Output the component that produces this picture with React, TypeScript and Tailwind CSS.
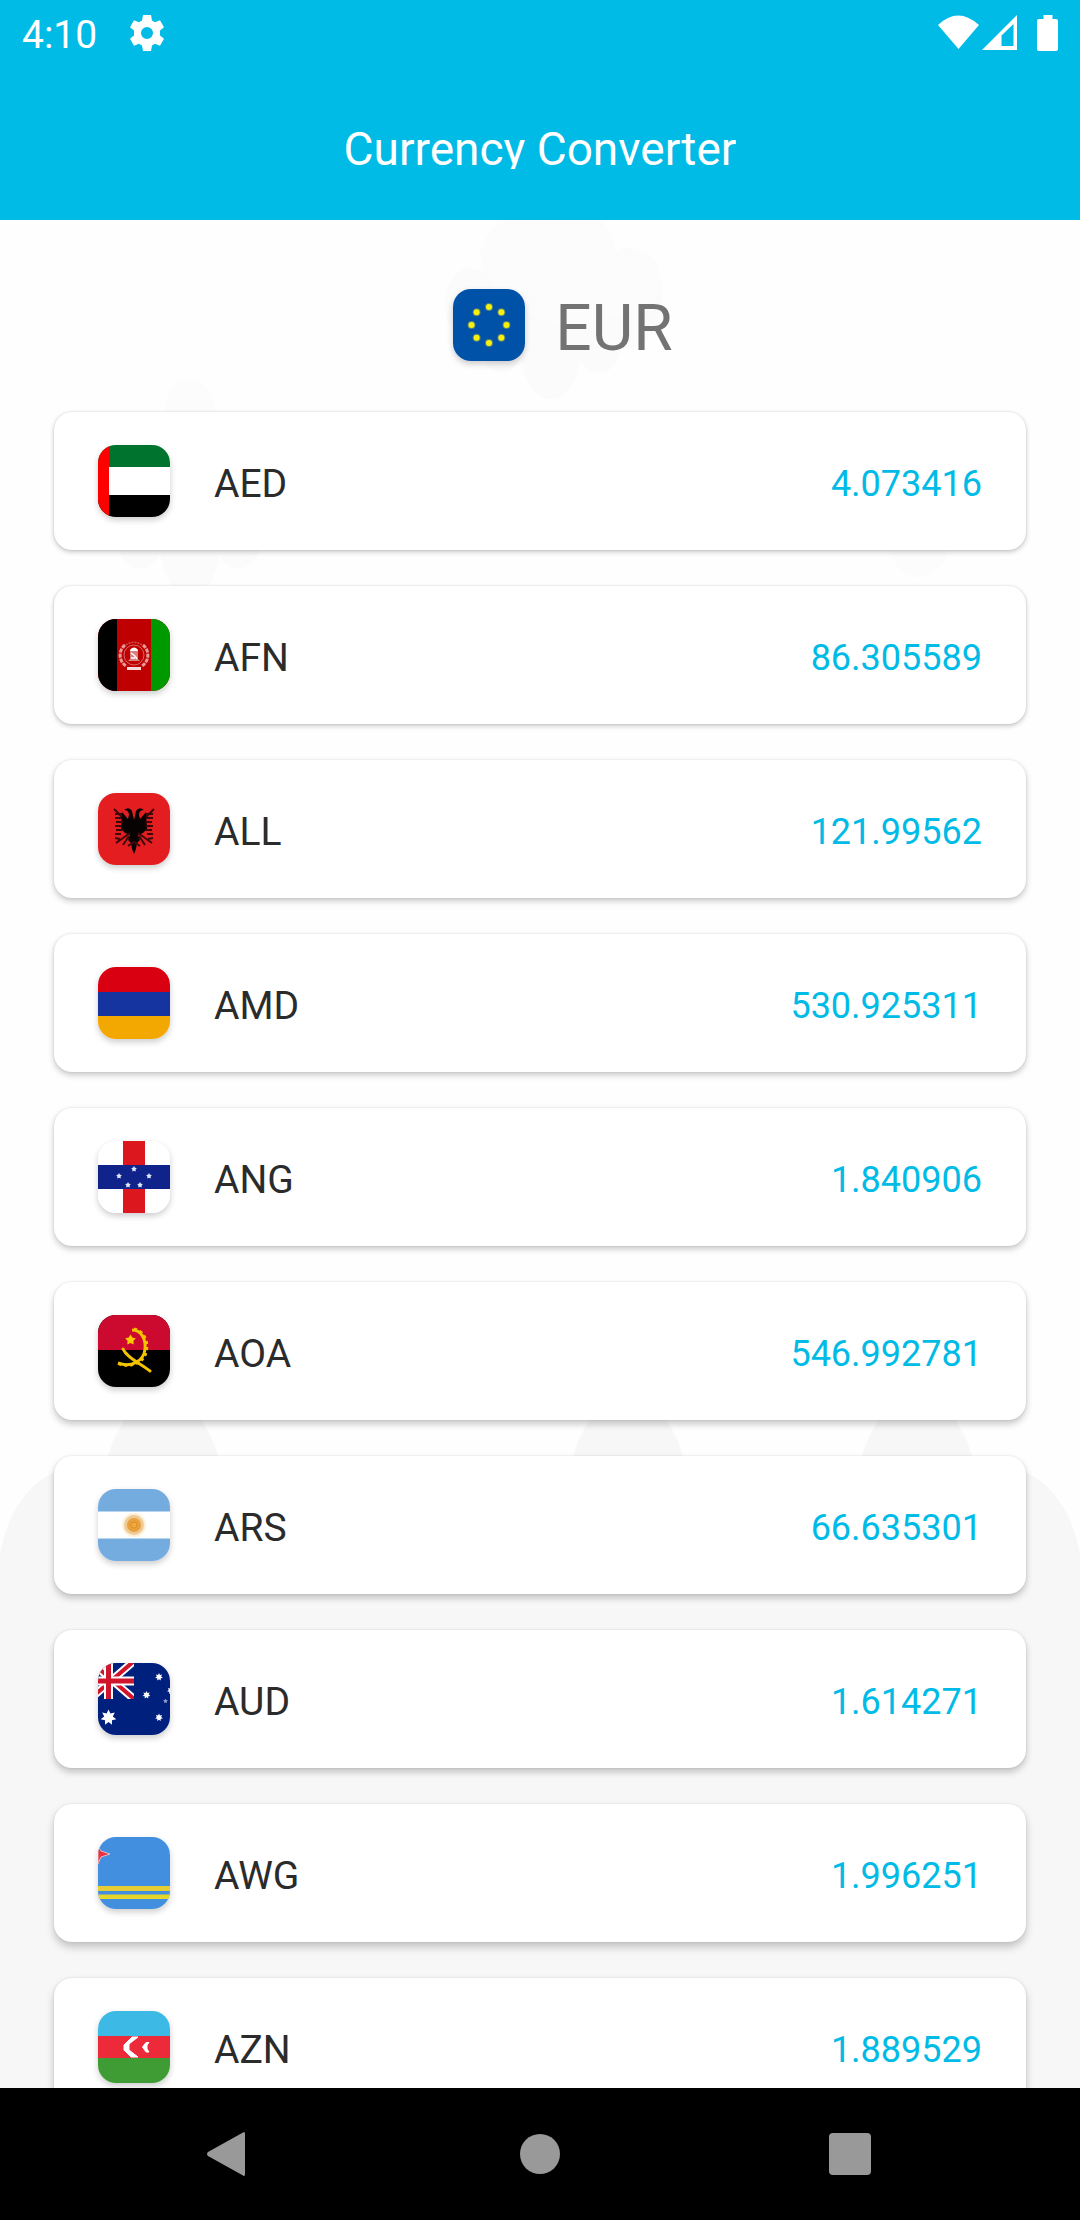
import React from 'react';

type IconProps = { className?: string };

function Star({ x, y, r, fill, points = 5 }: { x: number; y: number; r: number; fill: string; points?: number }) {
  const coords = Array.from({ length: points * 2 }, (_, i) => {
    const a = (Math.PI * i) / points - Math.PI / 2;
    const d = i % 2 === 0 ? r : r * 0.55;
    return `${x + d * Math.cos(a)},${y + d * Math.sin(a)}`;
  }).join(' ');
  return <polygon points={coords} fill={fill} />;
}

const flags: Record<string, React.ReactNode> = {
  EUR: (
    <>
      <rect width="72" height="72" fill="#0052a8" />
      {Array.from({ length: 8 }, (_, i) => {
        const a = (Math.PI * i) / 4;
        const x = 36 + 17.5 * Math.cos(a);
        const y = 36 + 18 * Math.sin(a);
        return (
          <g key={i}>
            <circle cx={x} cy={y} r={4} fill="#8fa55c" opacity={0.6} />
            <circle cx={x} cy={y} r={3} fill="#f6f00c" />
          </g>
        );
      })}
    </>
  ),
  AED: (
    <>
      <rect width="72" height="72" fill="#fff" />
      <rect width="72" height="22" fill="#00732f" />
      <rect y="50" width="72" height="22" fill="#000" />
      <rect width="11" height="72" fill="#f00" />
    </>
  ),
  AFN: (
    <>
      <rect width="72" height="72" fill="#be0000" />
      <rect width="19" height="72" fill="#000" />
      <rect x="53" width="19" height="72" fill="#009900" />
      <path d="M27 26A13 13 0 0 0 28 47M45 26A13 13 0 0 1 44 47" fill="none" stroke="#e59a9a" strokeWidth="3" strokeDasharray="4 1" />
      <path d="M28 26A13 13 0 0 1 44 26" fill="none" stroke="#d05050" strokeWidth="1.500" strokeDasharray="2 1" />
      <circle cx="36" cy="36" r="10" fill="none" stroke="#d76a6a" strokeWidth="1" />
      <path d="M29 49.500h14" stroke="#f6dada" strokeWidth="3" />
      <path d="M32 32q0-3 4-3.500q4 0.500 4 3.500z" fill="#fff" />
      <path d="M32 32h8v8l2 2H30l2-2z" fill="#d98080" />
      <path d="M33 34l4 3 2 3M33 39h4" stroke="#fff" strokeWidth="1.500" fill="none" />
    </>
  ),
  ALL: (
    <>
      <rect width="72" height="72" fill="#e41e20" />
      <path
        d="M36 27L34 18Q31 13 26 17Q31 17 31 22L30 26L24 19L23 36L27 40L32 42L30 47L33 50L34 56L36 61L38 56L39 50L42 47L40 42L45 40L49 36L48 19L42 26L41 22Q41 17 46 17Q41 13 38 18z"
        fill="#080303"
      />
      <path
        d="M16 16L24 24M17 21h7M17 25h7M18 29h7M17 33h7M18 37h7M17 41h6M32 40L18 50M31 43L25 52M22 46l-5-1M56 16L48 24M55 21h-7M55 25h-7M54 29h-7M55 33h-7M54 37h-7M55 41h-6M40 40L54 50M41 43L47 52M50 46l5-1M30 53l6-4l6 4"
        stroke="#3c090a"
        strokeWidth="2"
        fill="none"
      />
    </>
  ),
  AMD: (
    <>
      <rect width="72" height="25" fill="#d90012" />
      <rect y="25" width="72" height="24" fill="#1634a0" />
      <rect y="49" width="72" height="23" fill="#f2a800" />
    </>
  ),
  ANG: (
    <>
      <rect width="72" height="72" fill="#fff" />
      <rect x="25" width="22" height="72" fill="#dc171d" />
      <rect y="24" width="72" height="24" fill="#10238a" />
      <Star x={36} y={28} r={3} fill="#dfe8fa" />
      <Star x={21} y={35} r={3} fill="#dfe8fa" />
      <Star x={51} y={35} r={3} fill="#dfe8fa" />
      <Star x={30} y={44} r={3} fill="#dfe8fa" />
      <Star x={42} y={44} r={3} fill="#dfe8fa" />
    </>
  ),
  AOA: (
    <>
      <rect width="72" height="72" fill="#000" />
      <rect width="72" height="35" fill="#cc092f" />
      <Star x={32.5} y={25} r={5.5} fill="#ffcb00" />
      <path d="M34 15C44 15 48 25 47 34C46 46 33 53 20 48" fill="none" stroke="#f3c300" strokeWidth="3" />
      <path d="M36 14C46 16 50 26 48.500 35C47 48 32 54 19 48" fill="none" stroke="#f3c300" strokeWidth="3" strokeDasharray="3 3" />
      <path d="M25 34C29 43 42 48 52 56" fill="none" stroke="#f3c300" strokeWidth="3" strokeLinecap="round" />
    </>
  ),
  ARS: (
    <>
      <rect width="72" height="72" fill="#74acdf" />
      <rect y="22.500" width="72" height="27" fill="#fff" />
      <circle cx="36" cy="36" r="12" fill="#f6b22e" opacity="0.2" />
      <circle cx="36" cy="36" r="10" fill="#d6923c" opacity="0.4" />
      <circle cx="36" cy="36" r="7" fill="#e8a13a" />
      <circle cx="36" cy="36" r="3" fill="#f1aa3c" stroke="#d58a2c" strokeWidth="0.800" />
    </>
  ),
  AUD: (
    <>
      <rect width="72" height="72" fill="#00207d" />
      <svg width="36" height="36" viewBox="0 0 36 36">
        <path d="M-15 -8L36 36M36 -2L-15 42" stroke="#fff" strokeWidth="8" />
        <path d="M-15 -8L36 36M36 -2L-15 42" stroke="#cf142b" strokeWidth="4" />
        <path d="M10.500 0v36M0 18h36" stroke="#fff" strokeWidth="9" />
        <path d="M10.500 0v36M0 18h36" stroke="#cf142b" strokeWidth="5" />
      </svg>
      <Star x={10.5} y={54.5} r={8} points={7} fill="#fff" />
      <Star x={61} y={14} r={4} points={7} fill="#fff" />
      <Star x={48.5} y={32} r={4} points={7} fill="#fff" />
      <Star x={61} y={54.5} r={4} points={7} fill="#fff" />
      <Star x={73} y={27.5} r={4} points={7} fill="#fff" />
      <Star x={67.5} y={38} r={2.5} fill="#8f9ac8" />
    </>
  ),
  AWG: (
    <>
      <rect width="72" height="72" fill="#418fde" />
      <path d="M0 9L3 14L12 17L3 20L0 27z" fill="#ee2f3f" stroke="#e3b6c8" strokeWidth="1" />
      <rect y="49" width="72" height="5" fill="#e7cd35" />
      <rect y="57.500" width="72" height="4.500" fill="#e6d62c" />
    </>
  ),
  AZN: (
    <>
      <rect width="72" height="25" fill="#3db9e5" />
      <rect y="25" width="72" height="22" fill="#ed2a3a" />
      <rect y="47" width="72" height="25" fill="#3f9c35" />
      <path d="M40 26H34L26 34V39L33 46H40L31 39V33z" fill="#fff" stroke="#fff" />
      <path d="M51 31.500H48L44.500 36L48 41H51L49 38V34z" fill="#fff" stroke="#fff" />
    </>
  ),
};

function Flag({ code }: { code: string }) {
  return (
    <span className="block size-[72px] shrink-0 overflow-hidden rounded-[18px] shadow-[0_3px_6px_rgba(0,0,0,0.2)]">
      <svg viewBox="0 0 72 72" className="size-full" role="img" aria-label={`${code} flag`}>
        {flags[code]}
      </svg>
    </span>
  );
}

const rates = [
  { code: 'AED', rate: '4.073416' },
  { code: 'AFN', rate: '86.305589' },
  { code: 'ALL', rate: '121.99562' },
  { code: 'AMD', rate: '530.925311' },
  { code: 'ANG', rate: '1.840906' },
  { code: 'AOA', rate: '546.992781' },
  { code: 'ARS', rate: '66.635301' },
  { code: 'AUD', rate: '1.614271' },
  { code: 'AWG', rate: '1.996251' },
  { code: 'AZN', rate: '1.889529' },
];

function GearIcon({ className }: IconProps) {
  return (
    <svg viewBox="0 0 34 36" className={className} fill="currentColor" aria-hidden="true">
      <path
        fillRule="evenodd"
        d="M13 0h8l1 5.500 3 1.700 5-2 4 7-4 3.300v5l4 3.300-4 7-5-2-3 1.700-1 5.500h-8l-1-5.500-3-1.700-5 2-4-7 4-3.300v-5L0 12.200l4-7 5 2 3-1.700zM17 12a6 6 0 1 0 0 12a6 6 0 1 0 0-12z"
      />
    </svg>
  );
}

function StatusBar() {
  return (
    <div className="flex h-[66px] items-center justify-between px-[22px] text-white">
      <div className="flex items-center gap-[33px]">
        <span className="pt-1 text-[39px] leading-[62px]">4:10</span>
        <GearIcon className="h-9 w-[34px]" />
      </div>
      <svg viewBox="0 0 120 38" className="h-[38px] w-[120px]" fill="currentColor" role="img" aria-label="Wi-Fi, signal and battery">
        <path d="M0 11Q20 -8 41 11L20.500 35z" />
        <path fillRule="evenodd" d="M79 1v35H44zM75.500 10L63.500 21.500V32H75.500z" />
        <path d="M105.500 1h9v4h3.500q2 0 2 2v28q0 2-2 2h-17q-2 0-2-2V7q0-2 2-2h4.500z" />
      </svg>
    </div>
  );
}

function Backdrop() {
  return (
    <svg viewBox="0 0 1080 1868" preserveAspectRatio="xMidYMin slice" className="absolute inset-0 size-full" aria-hidden="true">
      <g fill="#fbfbfb">
        <ellipse cx="471" cy="84" rx="26" ry="36" />
        <ellipse cx="502" cy="116" rx="23" ry="37" />
        <ellipse cx="551" cy="124" rx="31" ry="55" />
        <ellipse cx="599" cy="116" rx="24" ry="37" />
        <ellipse cx="628" cy="78" rx="34" ry="50" />
        <rect x="480" y="60" width="150" height="60" />
        <ellipse cx="140" cy="312" rx="24" ry="37" />
        <ellipse cx="190" cy="320" rx="31" ry="55" />
        <ellipse cx="238" cy="312" rx="24" ry="37" />
      </g>
      <g fill="#fcfcfc">
        <path d="M480 36Q484 10 506 0H600Q616 14 615 32Q662 20 662 70Q630 104 560 104Q490 90 480 36z" />
        <ellipse cx="190" cy="195" rx="25" ry="36" />
        <ellipse cx="919" cy="310" rx="33" ry="47" />
      </g>
      <g fill="#f7f7f7">
        <ellipse cx="163" cy="1286" rx="62" ry="109" />
        <ellipse cx="628" cy="1286" rx="62" ry="109" />
        <ellipse cx="917" cy="1286" rx="62" ry="109" />
        <ellipse cx="78" cy="1360" rx="80" ry="113" />
        <ellipse cx="1002" cy="1360" rx="80" ry="113" />
        <rect x="78" y="1247" width="924" height="621" />
        <rect y="1355" width="1080" height="513" />
      </g>
    </svg>
  );
}

/** Shadows fall further the lower a card sits, as if lit from the top of the screen. */
function cardShadow(index: number) {
  const drop = 2 + Math.round(index / 3);
  return `0 ${drop}px ${drop + 3}px rgba(0,0,0,0.22), 0 0 2px rgba(0,0,0,0.12)`;
}

export default function App() {
  return (
    <div className="flex h-screen flex-col overflow-hidden bg-black font-['Roboto',sans-serif]">
      <header className="shrink-0 bg-[#00bbe6] text-white">
        <StatusBar />
        <h1 className="h-[154px] pt-[55px] text-center text-[46px] leading-[56px] font-normal">
          <span className="inline-block h-12 overflow-hidden">Currency Converter</span>
        </h1>
      </header>

      <main className="relative min-h-0 flex-1 overflow-hidden bg-[#fefefe]">
        <Backdrop />
        <div className="relative">
          <div className="flex h-48 items-start justify-center gap-[30px] pt-[69px] pl-[46px]">
            <Flag code="EUR" />
            <span className="text-[64px] leading-[80px] text-[#737373]">EUR</span>
          </div>
          <ul className="flex flex-col gap-9 px-[54px]">
            {rates.map(({ code, rate }, index) => (
              <li
                key={code}
                className="flex items-center rounded-[18px] bg-white px-11 py-[33px]"
                style={{ boxShadow: cardShadow(index) }}
              >
                <Flag code={code} />
                <span className="ml-11 pt-1.5 text-[39px] leading-[66px] text-[#2b2b2b]">{code}</span>
                <span className="ml-auto pt-1.5 text-[36px] leading-[66px] text-[#00bbe6]">{rate}</span>
              </li>
            ))}
          </ul>
        </div>
      </main>

      <nav className="grid h-[132px] shrink-0 grid-cols-3 items-center bg-black px-[75px] text-[#999]" aria-label="System navigation">
        <button type="button" aria-label="Back" className="justify-self-center">
          <svg viewBox="0 0 48 48" className="size-12" fill="currentColor">
            <path d="M37 2.500Q39 1 39 4V44Q39 47 37 45.500L2 26Q0 24 2 22z" />
          </svg>
        </button>
        <button type="button" aria-label="Home" className="size-10 justify-self-center rounded-full bg-[#999]" />
        <button type="button" aria-label="Recent apps" className="size-[42px] justify-self-center rounded-[4px] bg-[#999]" />
      </nav>
    </div>
  );
}
